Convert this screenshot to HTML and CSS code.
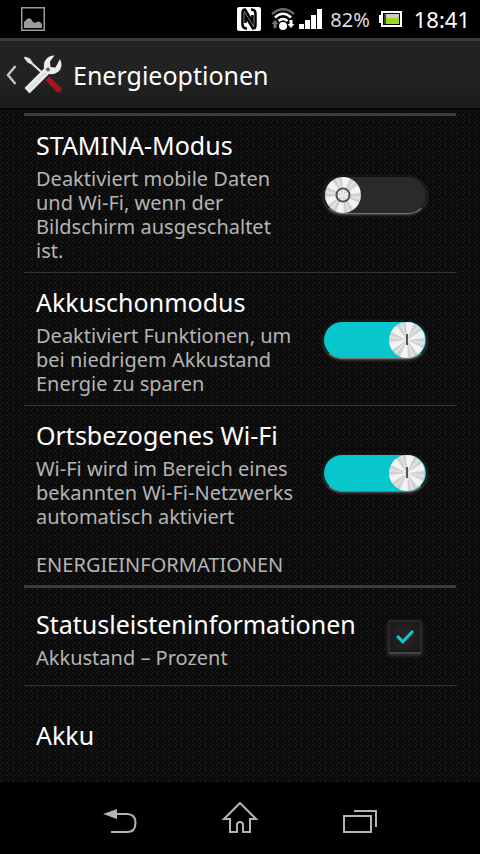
FILE: index.html
```
<!doctype html>
<html lang="de">
<head>
	<meta charset="UTF-8">
	<meta name="viewport" content="width=device-width, initial-scale=1">
	<title>Energieoptionen</title>
	<link rel="stylesheet" href="styles.css">
</head>
<body>
	<div class="statusbar">
		<svg class="icon-picture" width="24" height="24" viewBox="0 0 24 24">
			<rect x="0.75" y="0.75" width="22.5" height="22.5" fill="none" stroke="#9a9a9a" stroke-width="1.5"/>
			<path d="M3 21v-6l3-3 2-1 2 1 2 3 2 1 3-1.500 2 .5 2 2v4z" fill="#9a9a9a"/>
		</svg>
		<svg class="icon-nfc" width="24" height="24" viewBox="0 0 24 24">
			<rect width="24" height="24" rx="2" fill="#fff"/>
			<g fill="none" stroke="#000" stroke-width="2.500">
				<path d="M10 21.500Q5.500 21.500 5.500 17V6q0-3.500 2.500-3.500L15.500 15V8"/>
				<path d="M14 2.500q4.500 0 4.500 4.500v11q0 3.500-2.500 3.500L8.500 9v7"/>
			</g>
		</svg>
		<svg class="icon-wifi" width="24" height="23" viewBox="0 0 24 23">
			<g fill="none" stroke="#fff" stroke-width="2.500">
				<path d="M1 6q11-9.500 22 0" stroke="#666"/>
				<path d="M4 9.500q8-7.500 16 0"/>
				<path d="M7.500 13q4.500-4 9 0"/>
			</g>
			<circle cx="12" cy="18" r="4" fill="#fff"/>
			<path d="M4 12l3.500 4H5.500v4h-3v-4H.5z" fill="#777"/>
			<path d="M20 20l-3.500-4h2v-4h3v4h2z" fill="#fff"/>
		</svg>
		<svg class="icon-signal" width="23" height="20" viewBox="0 0 23 20">
			<path d="M0 15h5v5H0zM6 11h5v9H6zM12 6h5v14h-5zM18 0h5v20h-5z" fill="#fff"/>
		</svg>
		<span class="percent">82%</span>
		<svg class="icon-battery" width="23" height="16" viewBox="0 0 23 16">
			<rect x="3" y="1" width="19" height="14" fill="#000" stroke="#fff" stroke-width="2"/>
			<path d="M0 4h3v8H0z" fill="#fff"/>
			<path d="M5 3h3v10H5z" fill="#444"/>
			<path d="M7 3h13v4H7z" fill="#ccc"/>
			<path d="M7 7h13v6H7z" fill="#9ad91b"/>
		</svg>
		<span class="clock">18:41</span>
	</div>

	<header class="header">
		<button class="up" type="button" aria-label="Nach oben">
			<svg width="11" height="20" viewBox="0 0 11 20">
				<path d="M9.500 1L2 10l7.500 9" fill="none" stroke="#c4c4c4" stroke-width="2.500"/>
			</svg>
			<svg width="40" height="40" viewBox="0 0 40 40">
				<path d="M1 1.500l5 2 3 4.500L20 18l-1.500 1.500L7.500 9.500 3.500 7.500 0 3z" fill="#e2e2e2"/>
				<path d="M25 21.500L37 32.500q2 2-.5 4t-4.500 0L21.500 25z" fill="#a3161d"/>
				<path d="M0.500 33L20 13.500q-1-8 4.500-11.500 3-2 6-1.500l-4.500 6 .5 5.500 5 .5 4.500-8.500q3 6 0 11-4 5-11 4L5.500 38.500z" fill="#ececec"/>
				<path d="M5 34L22 17" stroke="#d2d2d2" stroke-width="2" stroke-dasharray="2 1"/>
				<circle cx="24" cy="14.500" r="2" fill="#666"/>
			</svg>
		</button>
		<h1 class="heading">Energieoptionen</h1>
	</header>

	<main class="list">
		<label class="row">
			<span class="text">
				<span class="title">STAMINA-Modus</span>
				<span class="summary">Deaktiviert mobile Daten und Wi-Fi, wenn der Bildschirm ausgeschaltet ist.</span>
			</span>
			<input class="switch" type="checkbox" role="switch">
		</label>
		<label class="row">
			<span class="text">
				<span class="title">Akkuschonmodus</span>
				<span class="summary">Deaktiviert Funktionen, um bei niedrigem Akkustand Energie zu sparen</span>
			</span>
			<input class="switch" type="checkbox" role="switch" checked>
		</label>
		<label class="row">
			<span class="text">
				<span class="title">Ortsbezogenes Wi-Fi</span>
				<span class="summary">Wi-Fi wird im Bereich eines bekannten Wi-Fi-Netzwerks automatisch aktiviert</span>
			</span>
			<input class="switch" type="checkbox" role="switch" checked>
		</label>
		<h2 class="category">ENERGIEINFORMATIONEN</h2>
		<label class="row">
			<span class="text">
				<span class="title">Statusleisteninformationen</span>
				<span class="summary">Akkustand – Prozent</span>
			</span>
			<input class="check" type="checkbox" checked>
		</label>
		<a class="row single" href="#"><span class="title">Akku</span></a>
	</main>

	<nav class="navbar">
		<button type="button" aria-label="Zurück">
			<svg width="36" height="32" viewBox="0 0 36 32">
				<path d="M14 12h11q8.500 0 8.500 9t-8.500 9H9" fill="none" stroke="#b4b4b4" stroke-width="2"/>
				<path d="M1 12l14-5v10z" fill="#b4b4b4"/>
			</svg>
		</button>
		<button type="button" aria-label="Startseite">
			<svg width="36" height="32" viewBox="0 0 36 32">
				<path d="M18 1L2 17h6v13h7v-7q0-3 3-3t3 3v7h7V17h6z" fill="none" stroke="#b4b4b4" stroke-width="2"/>
			</svg>
		</button>
		<button type="button" aria-label="Letzte Apps">
			<svg width="36" height="32" viewBox="0 0 36 32">
				<path d="M2 14h27v16H2zM12 9h22v16" fill="none" stroke="#b4b4b4" stroke-width="2"/>
			</svg>
		</button>
	</nav>
</body>
</html>
```
FILE: styles.css
```
* {
	box-sizing: border-box;
}
body {
	margin: 0;
	min-height: 100vh;
	display: flex;
	flex-direction: column;
	background-color: #101010;
	background-image:
		conic-gradient(rgba(0,0,0,.55) 25%, transparent 0 50%, rgba(0,0,0,.4) 0 75%, transparent 0),
		conic-gradient(transparent 75%, rgba(255,255,255,.03) 0);
	background-size: 4px 4px, 6px 6px;
	color: #fff;
	font-family: "Noto Sans", sans-serif;
}
button {
	padding: 0;
	border: 0;
	background: none;
	cursor: pointer;
}
svg {
	display: block;
	flex: none;
}

/* status bar */
.statusbar {
	display: flex;
	flex: none;
	align-items: center;
	height: 38px;
	padding: 0 10px 0 21px;
	background-color: #000;
}
.icon-nfc {
	margin-left: auto;
}
.icon-wifi {
	margin-left: 10px;
}
.icon-signal {
	margin-left: 4px;
}
.percent {
	margin-left: 8px;
	color: #ddd;
	font-size: 20px;
}
.icon-battery {
	margin-left: 9px;
}
.clock {
	margin-left: 12px;
	font-size: 22px;
}

/* header */
.header {
	display: flex;
	flex: none;
	align-items: center;
	height: 70px;
	padding-left: 6px;
	border-top: 3px solid #3a3a3a;
	background: linear-gradient(#222 60%, #1a1a1a);
	box-shadow: 0 1px 2px #000;
}
.up {
	display: flex;
	align-items: center;
	gap: 7px;
}
.heading {
	margin: 0 0 0 9px;
	font-size: 25px;
	font-weight: normal;
	line-height: 36px;
}

/* settings list */
.list {
	flex: 1 0 auto;
	margin: 5px 24px 0;
	border-top: 3px solid #3c3c3c;
}
.row {
	display: flex;
	align-items: center;
	justify-content: space-between;
	min-height: 98px;
	padding: 10px 29px 9px 12px;
	border-bottom: 1px solid #343434;
	color: #fff;
	text-decoration: none;
	cursor: pointer;
}
.row:has(+ .category), .single {
	border-bottom: 0;
}
.text {
	flex: 1;
}
.title {
	display: block;
	font-size: 25px;
	line-height: 38px;
}
.summary {
	display: block;
	max-width: 264px;
	margin-top: 3px;
	color: #b4b4b4;
	font-size: 20px;
	line-height: 24px;
}
.single {
	min-height: 96px;
}
.category {
	margin: 0;
	padding: 13px 12px 6px;
	border-bottom: 3px solid #3c3c3c;
	color: #b4b4b4;
	font-size: 20px;
	font-weight: normal;
	line-height: 28px;
}

/* switch */
.switch {
	appearance: none;
	display: flex;
	flex: none;
	align-items: center;
	width: 104px;
	height: 38px;
	margin: 0;
	padding: 0 1px;
	border: 1px solid #111;
	border-bottom-color: #777;
	border-radius: 19px;
	background-color: #292b2b;
	box-shadow: 0 1px 3px #555;
	cursor: pointer;
}
.switch::before {
	content: "";
	width: 36px;
	height: 36px;
	border-radius: 50%;
	background:
		radial-gradient(circle, transparent 5px, #555 6px 7px, transparent 8px),
		repeating-conic-gradient(#f4f4f4 0 18deg, #c8c8c8 30deg, #e6e6e6 40deg, #cacaca 52deg, #f4f4f4 60deg);
}
.switch:checked {
	justify-content: flex-end;
	background-color: #07c7cc;
}
.switch:checked::before {
	background:
		linear-gradient(#555, #555) center / 2px 11px no-repeat,
		repeating-conic-gradient(#f4f4f4 0 18deg, #c8c8c8 30deg, #e6e6e6 40deg, #cacaca 52deg, #f4f4f4 60deg);
}

/* check box */
.check {
	appearance: none;
	display: grid;
	place-items: center;
	flex: none;
	width: 34px;
	height: 34px;
	margin: 0 5px 0 0;
	border: 2px solid #292929;
	border-bottom-color: #444;
	border-radius: 2px;
	background: radial-gradient(#282828, #171717);
	box-shadow: 0 2px 4px #333;
	cursor: pointer;
}
.check:checked::before {
	content: "";
	width: 18px;
	height: 14px;
	background-color: #12c6cc;
	clip-path: polygon(0 50%, 12% 36%, 38% 68%, 88% 0, 100% 14%, 38% 100%);
}

/* navigation keys */
.navbar {
	display: flex;
	flex: none;
	justify-content: center;
	gap: 84px;
	height: 72px;
	background-color: #000;
}
.navbar button {
	display: flex;
	align-items: center;
}
```
